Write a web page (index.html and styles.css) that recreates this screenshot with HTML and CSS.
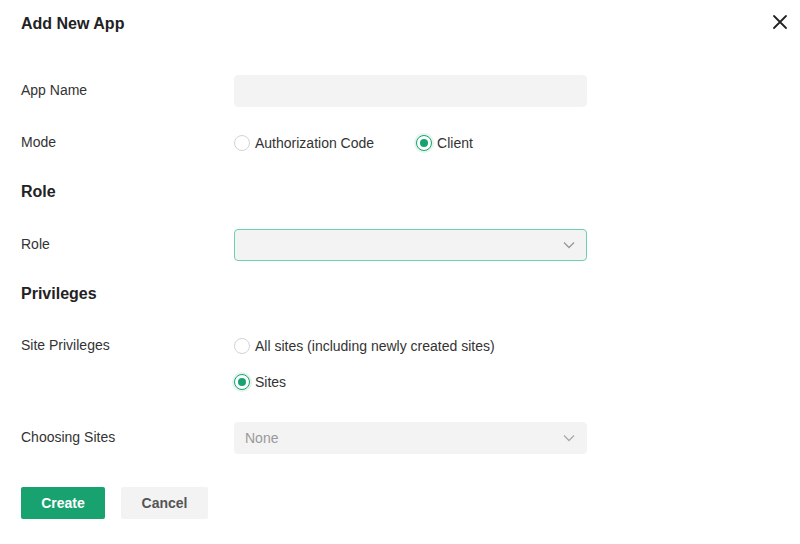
FILE: index.html
```html
<!DOCTYPE html>
<html>
<head>
<meta charset="utf-8">
<link rel="stylesheet" href="styles.css">
</head>
<body>
<div class="dialog">
  <div class="header">
    <h1 class="title">Add New App</h1>
    <button class="close" aria-label="Close">
      <svg width="16" height="16" viewBox="0 0 16 16"><path d="M2 2L14 14M14 2L2 14" stroke="#222" stroke-width="1.8" stroke-linecap="round"/></svg>
    </button>
  </div>

  <div class="row r-appname">
    <label class="label">App Name</label>
    <div class="field"><input class="input" type="text"></div>
  </div>

  <div class="row r-mode">
    <div class="label">Mode</div>
    <div class="field radios-inline">
      <span class="radio"><span class="dot"></span>Authorization Code</span>
      <span class="radio checked"><span class="dot"></span>Client</span>
    </div>
  </div>

  <h2 class="section r-rolehead">Role</h2>

  <div class="row r-role">
    <div class="label">Role</div>
    <div class="field">
      <div class="select focused">
        <span class="value"></span>
        <svg class="chev" width="12" height="8" viewBox="0 0 12 8"><path d="M1 1.5L6 6.5L11 1.5" fill="none" stroke="#999" stroke-width="1.3"/></svg>
      </div>
    </div>
  </div>

  <h2 class="section r-privhead">Privileges</h2>

  <div class="row r-site">
    <div class="label">Site Privileges</div>
    <div class="field radios-stack">
      <span class="radio"><span class="dot"></span>All sites (including newly created sites)</span>
      <span class="radio checked"><span class="dot"></span>Sites</span>
    </div>
  </div>

  <div class="row r-choose">
    <div class="label">Choosing Sites</div>
    <div class="field">
      <div class="select">
        <span class="value placeholder">None</span>
        <svg class="chev" width="12" height="8" viewBox="0 0 12 8"><path d="M1 1.5L6 6.5L11 1.5" fill="none" stroke="#aaa" stroke-width="1.3"/></svg>
      </div>
    </div>
  </div>

  <div class="actions">
    <button class="btn primary">Create</button>
    <button class="btn secondary">Cancel</button>
  </div>
</div>
</body>
</html>
```

FILE: styles.css
```css
* { box-sizing: border-box; }
html, body { margin: 0; padding: 0; background: #fff; }
body {
  font-family: "Liberation Sans", Arial, sans-serif;
  font-size: 14px;
  color: #333;
}
.dialog {
  width: 800px;
  height: 544px;
  padding: 0 21px;
  display: flex;
  flex-direction: column;
}
.header {
  height: 46px;
  display: flex;
  align-items: center;
  justify-content: space-between;
}
.title {
  margin: 0;
  padding-top: 2px;
  font-size: 16px;
  font-weight: bold;
  color: #222;
  line-height: 44px;
}
.close {
  border: 0;
  background: none;
  padding: 0;
  width: 16px;
  height: 16px;
  margin-right: -9px;
  margin-top: -2px;
  display: flex;
}
.row {
  display: flex;
  align-items: flex-start;
}
.label {
  width: 213px;
  flex: none;
  line-height: 30px;
  color: #333;
}
.field {
  width: 353px;
}
.input {
  display: block;
  width: 100%;
  height: 32px;
  border: 1px solid #f3f3f3;
  background: #f3f3f3;
  border-radius: 4px;
  outline: none;
  font: inherit;
  padding: 0 10px;
}
.section {
  margin: 0;
  font-size: 16px;
  font-weight: bold;
  color: #222;
  line-height: 32px;
  height: 32px;
}
.r-rolehead { padding-top: 1px; }
.radios-inline {
  display: flex;
  gap: 42px;
  height: 32px;
  align-items: center;
}
.radios-stack {
  display: flex;
  flex-direction: column;
  gap: 4px;
}
.radios-stack .radio { height: 32px; }
.radio {
  display: inline-flex;
  align-items: center;
  gap: 5px;
  color: #333;
  white-space: nowrap;
}
.dot {
  width: 16px;
  height: 16px;
  border-radius: 50%;
  border: 1px solid #d3d3d3;
  background: #fff;
  flex: none;
  position: relative;
}
.radio.checked .dot {
  border-color: #17a26f;
  box-shadow: 0 0 0 2px rgba(23, 162, 111, 0.12);
}
.radio.checked .dot::after {
  content: "";
  position: absolute;
  left: 3px;
  top: 3px;
  width: 8px;
  height: 8px;
  border-radius: 50%;
  background: #17a26f;
}
.select {
  height: 32px;
  background: #f3f3f3;
  border: 1px solid #f3f3f3;
  border-radius: 4px;
  display: flex;
  align-items: center;
  justify-content: space-between;
  padding: 0 11px 0 10px;
}
.select.focused {
  border-color: #6dd0ab;
}
.placeholder { color: #999; }
.chev { flex: none; }

.r-appname { margin-top: 29px; }
.r-mode { margin-top: 20px; }
.r-rolehead { margin-top: 16px; }
.r-role { margin-top: 22px; }
.r-privhead { margin-top: 17px; }
.r-site { margin-top: 20px; }
.r-choose { margin-top: 24px; }

.actions {
  margin-top: 33px;
  display: flex;
  gap: 16px;
}
.btn {
  height: 32px;
  border: 0;
  border-radius: 2px;
  font-family: inherit;
  font-size: 14px;
  font-weight: bold;
  cursor: pointer;
}
.primary {
  width: 84px;
  background: #17a26f;
  color: #fff;
}
.secondary {
  width: 87px;
  background: #f3f3f3;
  color: #555;
}
```
